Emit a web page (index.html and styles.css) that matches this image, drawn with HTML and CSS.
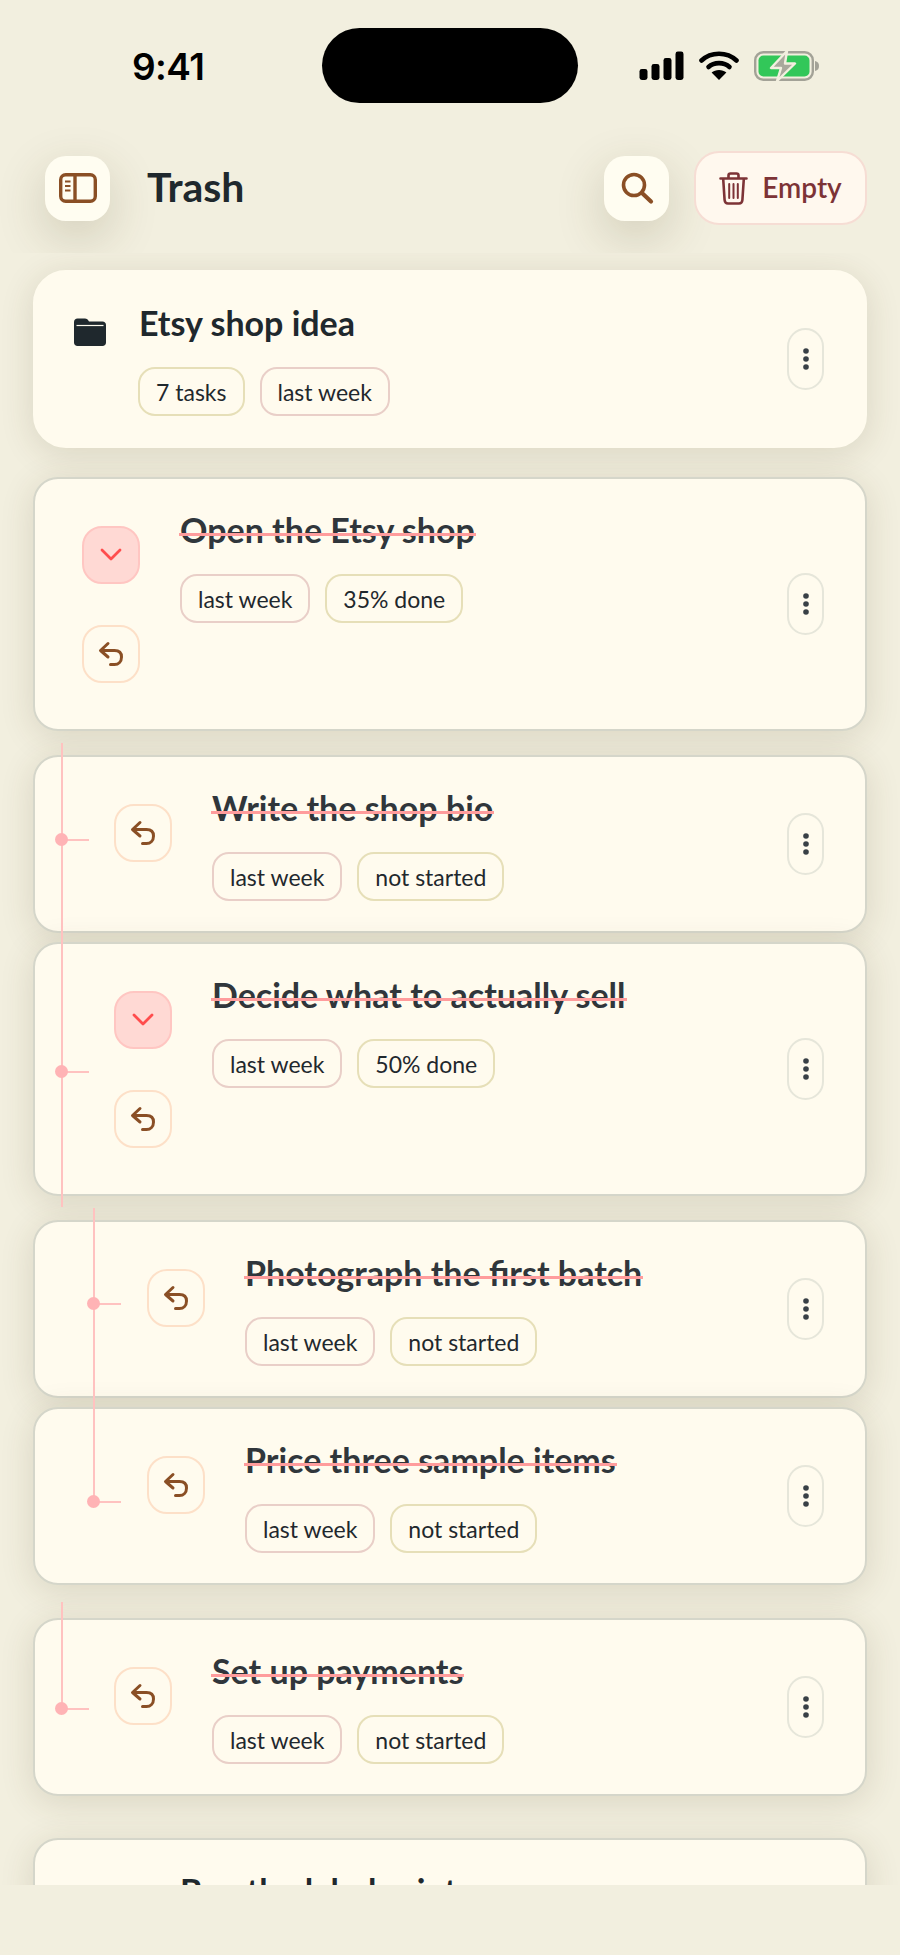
FILE: index.html
```html
<!DOCTYPE html>
<html lang="en">
<head>
    <meta charset="UTF-8">
    <meta name="viewport" content="width=device-width, initial-scale=1.0">
    <title>Trash</title>
    <link rel="stylesheet" href="styles.css">
</head>
<body>
    <svg class="sprites" width="0" height="0">
        <symbol id="undo" viewBox="0 0 26 26">
            <path d="M10 2.5 L2.5 9.5 L10 16 M3 9.5 H16.5 C21 9.5 23.5 12 23.5 16 C23.5 20.5 20.5 23.5 16.5 23.5 H12.5" fill="none" stroke="currentColor" stroke-width="3" stroke-linecap="round" stroke-linejoin="round"/>
        </symbol>
        <symbol id="chevron" viewBox="0 0 22 14">
            <path d="M2 2 L11 11 L20 2" fill="none" stroke="currentColor" stroke-width="2.8" stroke-linecap="round" stroke-linejoin="round"/>
        </symbol>
        <symbol id="dots" viewBox="0 0 8 24">
            <circle cx="4" cy="4" r="2.8"/>
            <circle cx="4" cy="12" r="2.8"/>
            <circle cx="4" cy="20" r="2.8"/>
        </symbol>
    </svg>

    <div class="status-bar">
        <span class="clock">9:41</span>
        <div class="island"></div>
        <div class="status-icons">
            <svg class="signal" width="45" height="29" viewBox="0 0 45 29">
                <rect x="0.5" y="18" width="8" height="11" rx="2.4"/>
                <rect x="12.5" y="13" width="8" height="16" rx="2.4"/>
                <rect x="24.5" y="7" width="8" height="22" rx="2.4"/>
                <rect x="36.5" y="0.5" width="8" height="28.5" rx="2.4"/>
            </svg>
            <svg class="wifi" width="40" height="29" viewBox="0 0 40 29">
                <path d="M2.5 9.5 C12 0.5 28 0.5 37.5 9.5" fill="none" stroke="#000" stroke-width="4.6" stroke-linecap="round"/>
                <path d="M9.5 16 C15 10.8 25 10.8 30.5 16" fill="none" stroke="#000" stroke-width="4.6" stroke-linecap="round"/>
                <path d="M20 29 L12.6 21.6 C16.5 18.2 23.5 18.2 27.4 21.6 Z"/>
            </svg>
            <svg class="battery" width="66" height="30" viewBox="0 0 66 30">
                <rect x="1.2" y="1.2" width="57.6" height="27.6" rx="8" fill="none" stroke="#a3a297" stroke-width="2.4"/>
                <rect x="4.5" y="4.5" width="51" height="21" rx="5" fill="#32c759"/>
                <path d="M61 10 C64 10.6 65 12.5 65 15 C65 17.5 64 19.4 61 20 Z" fill="#a3a297"/>
                <path d="M33 0 L17 17 H27 L23 30 L41 12.5 H31 Z" fill="#a9a89c" stroke="#f2efdf" stroke-width="2.4" stroke-linejoin="round"/>
            </svg>
        </div>
    </div>

    <header class="top-bar">
        <button class="icon-btn">
            <svg width="38" height="30" viewBox="0 0 38 30">
                <rect x="1.7" y="1.7" width="34.6" height="26.6" rx="5" fill="none" stroke="#8a4f25" stroke-width="3.4"/>
                <path d="M16 2 V28" stroke="#8a4f25" stroke-width="3.4"/>
                <path d="M6 8.5 H11.5 M6 13 H11.5 M6 17.5 H11.5" stroke="#8a4f25" stroke-width="2.2"/>
            </svg>
        </button>
        <h1>Trash</h1>
        <button class="icon-btn search-btn">
            <svg width="34" height="34" viewBox="0 0 34 34">
                <circle cx="14" cy="14" r="10.5" fill="none" stroke="#8a4f25" stroke-width="3.6"/>
                <path d="M22 22 L31 30.5" stroke="#8a4f25" stroke-width="4.2" stroke-linecap="round"/>
            </svg>
        </button>
        <button class="empty-btn">
            <svg width="29" height="33" viewBox="0 0 29 33">
                <path d="M1.5 6.5 H27.5 M9.5 6 V3.5 C9.5 2.2 10.3 1.5 11.5 1.5 H17.5 C18.7 1.5 19.5 2.2 19.5 3.5 V6 M4.2 7 L5.6 28 C5.8 30.3 7 31.5 9 31.5 H20 C22 31.5 23.2 30.3 23.4 28 L24.8 7" fill="none" stroke="#7d3336" stroke-width="2.6" stroke-linecap="round" stroke-linejoin="round"/>
                <path d="M10.2 12 V26 M14.5 12 V26 M18.8 12 V26" stroke="#7d3336" stroke-width="2" stroke-linecap="round"/>
            </svg>
            <span class="empty-label">Empty</span>
        </button>
    </header>

    <main class="list">
        <section class="card project-card">
            <svg class="folder" width="32" height="28" viewBox="0 0 32 28">
                <path d="M3.5 0.5 H11 C12.6 0.5 13.4 1.2 14.2 2.3 L15 3.5 H28.5 C30.5 3.5 32 5 32 7 V24.5 C32 26.5 30.5 28 28.5 28 H3.5 C1.5 28 0 26.5 0 24.5 V4 C0 2 1.5 0.5 3.5 0.5 Z" fill="#1f282d"/>
                <path d="M2.5 7.5 H29.5" stroke="#fffbee" stroke-width="1.2"/>
            </svg>
            <div class="card-body">
                <h2>Etsy shop idea</h2>
                <div class="tags">
                    <span class="tag">7 tasks</span>
                    <span class="tag tag-date">last week</span>
                </div>
            </div>
            <button class="menu-btn"><svg width="8" height="24"><use href="#dots"/></svg></button>
        </section>

        <section class="card gap-big">
            <div class="actions">
                <button class="square-btn chevron-btn"><svg width="22" height="14"><use href="#chevron"/></svg></button>
                <button class="square-btn undo-btn"><svg width="26" height="26"><use href="#undo"/></svg></button>
            </div>
            <div class="card-body">
                <h2 class="done">Open the Etsy shop</h2>
                <div class="tags">
                    <span class="tag tag-date">last week</span>
                    <span class="tag">35% done</span>
                </div>
            </div>
            <button class="menu-btn"><svg width="8" height="24"><use href="#dots"/></svg></button>
        </section>

        <div class="thread-group gap-mid">
            <div class="thread thread-one">
                <i class="branch branch-bio"></i>
                <i class="branch branch-sell"></i>
            </div>
            <section class="card level-1">
                <div class="actions">
                    <button class="square-btn undo-btn"><svg width="26" height="26"><use href="#undo"/></svg></button>
                </div>
                <div class="card-body">
                    <h2 class="done">Write the shop bio</h2>
                    <div class="tags">
                        <span class="tag tag-date">last week</span>
                        <span class="tag">not started</span>
                    </div>
                </div>
                <button class="menu-btn"><svg width="8" height="24"><use href="#dots"/></svg></button>
            </section>
            <section class="card level-1 gap-tight">
                <div class="actions">
                    <button class="square-btn chevron-btn"><svg width="22" height="14"><use href="#chevron"/></svg></button>
                    <button class="square-btn undo-btn"><svg width="26" height="26"><use href="#undo"/></svg></button>
                </div>
                <div class="card-body">
                    <h2 class="done">Decide what to actually sell</h2>
                    <div class="tags">
                        <span class="tag tag-date">last week</span>
                        <span class="tag">50% done</span>
                    </div>
                </div>
                <button class="menu-btn"><svg width="8" height="24"><use href="#dots"/></svg></button>
            </section>
        </div>

        <div class="thread-group gap-mid">
            <div class="thread thread-two">
                <i class="branch branch-photo"></i>
                <i class="branch branch-price"></i>
            </div>
            <section class="card level-2">
                <div class="actions">
                    <button class="square-btn undo-btn"><svg width="26" height="26"><use href="#undo"/></svg></button>
                </div>
                <div class="card-body">
                    <h2 class="done">Photograph the first batch</h2>
                    <div class="tags">
                        <span class="tag tag-date">last week</span>
                        <span class="tag">not started</span>
                    </div>
                </div>
                <button class="menu-btn"><svg width="8" height="24"><use href="#dots"/></svg></button>
            </section>
            <section class="card level-2 gap-tight">
                <div class="actions">
                    <button class="square-btn undo-btn"><svg width="26" height="26"><use href="#undo"/></svg></button>
                </div>
                <div class="card-body">
                    <h2 class="done">Price three sample items</h2>
                    <div class="tags">
                        <span class="tag tag-date">last week</span>
                        <span class="tag">not started</span>
                    </div>
                </div>
                <button class="menu-btn"><svg width="8" height="24"><use href="#dots"/></svg></button>
            </section>
        </div>

        <div class="thread-group gap-large">
            <div class="thread thread-three">
                <i class="branch branch-pay"></i>
            </div>
            <section class="card level-1">
                <div class="actions">
                    <button class="square-btn undo-btn"><svg width="26" height="26"><use href="#undo"/></svg></button>
                </div>
                <div class="card-body">
                    <h2 class="done">Set up payments</h2>
                    <div class="tags">
                        <span class="tag tag-date">last week</span>
                        <span class="tag">not started</span>
                    </div>
                </div>
                <button class="menu-btn"><svg width="8" height="24"><use href="#dots"/></svg></button>
            </section>
        </div>

        <section class="card gap-last">
            <div class="actions">
                <button class="square-btn undo-btn"><svg width="26" height="26"><use href="#undo"/></svg></button>
            </div>
            <div class="card-body">
                <h2>Buy the label printer</h2>
            </div>
        </section>
    </main>
</body>
</html>
```

FILE: styles.css
```css
* {
    box-sizing: border-box;
}
body {
    margin: 0;
    height: 1955px;
    overflow: hidden;
    background: #f2efdf;
    font-family: 'Lato', sans-serif;
    color: #1f282d;
}
button {
    font-family: inherit;
    padding: 0;
    cursor: pointer;
}
.sprites {
    position: absolute;
}

/* status bar */
.status-bar {
    height: 127px;
    display: flex;
    align-items: flex-start;
    padding-top: 28px;
}
.clock {
    width: 322px;
    padding: 18px 0 0 132px;
    font-family: 'Inter', sans-serif;
    font-size: 37px;
    line-height: 42px;
    font-weight: 600;
    letter-spacing: -0.6px;
    color: #000;
}
.island {
    width: 256px;
    height: 75px;
    border-radius: 38px;
    background: #000;
}
.status-icons {
    display: flex;
    align-items: flex-start;
    padding: 23px 0 0 61px;
}
.wifi {
    margin-left: 15px;
}
.battery {
    margin-left: 15px;
}

/* top bar */
.top-bar {
    height: 126px;
    display: flex;
    align-items: center;
    padding: 0 33px 4px 45px;
    overflow: hidden;
}
.top-bar h1 {
    flex: 1;
    margin: 0 0 2px 37px;
    font-size: 41px;
    font-weight: 700;
    line-height: 48px;
}
.icon-btn {
    width: 65px;
    height: 65px;
    border: none;
    border-radius: 21px;
    background: #fffdf1;
    display: flex;
    align-items: center;
    justify-content: center;
    box-shadow: 0 16px 50px rgba(70, 60, 20, 0.2);
}
.empty-btn {
    width: 173px;
    height: 74px;
    margin-left: 25px;
    border: 2px solid #f6ddd4;
    border-radius: 25px;
    background: #fff8ee;
    color: #7d3336;
    font-size: 28px;
    font-weight: 600;
    display: flex;
    align-items: center;
    justify-content: center;
    gap: 14px;
}
.empty-label {
    margin-bottom: 3px;
}

/* list */
.list {
    height: 1632px;
    padding: 17px 33px 0;
    overflow: hidden;
}
.card {
    position: relative;
    display: flex;
    align-items: flex-start;
    min-height: 178px;
    padding-left: 47px;
    background: #fffbee;
    border: 2px solid #d5d6ca;
    border-radius: 25px;
    box-shadow: 0 6px 34px rgba(70, 60, 20, 0.14);
}
.project-card {
    border-color: #fffbee;
    border-radius: 33px;
    padding-left: 39px;
}
.gap-big {
    margin-top: 29px;
}
.gap-mid {
    margin-top: 24px;
}
.gap-large {
    margin-top: 33px;
}
.gap-tight {
    margin-top: 9px;
}
.gap-last {
    margin-top: 42px;
}
.level-1 {
    padding-left: 79px;
}
.level-2 {
    padding-left: 112px;
}
.folder {
    margin-top: 46px;
    flex: none;
}
.project-card .card-body {
    margin-left: 33px;
    padding-top: 31px;
}
.project-card .tags {
    margin-left: -1px;
}
.actions {
    flex: none;
    width: 58px;
    padding: 47px 0 46px;
    display: flex;
    flex-direction: column;
    gap: 41px;
}
.card-body {
    flex: 1;
    margin-left: 40px;
    padding-top: 31px;
}
.card-body h2 {
    margin: 0;
    font-size: 34px;
    line-height: 40px;
    font-weight: 700;
}
.done {
    color: #30363b;
    width: fit-content;
    position: relative;
}
.done::after {
    content: "";
    position: absolute;
    left: -1px;
    right: -1px;
    top: 23px;
    height: 3px;
    background: #ff9c9c;
}
.tags {
    display: flex;
    gap: 15px;
    margin-top: 24px;
}
.tag {
    height: 49px;
    padding: 0 16px;
    display: flex;
    align-items: center;
    border: 2px solid #e6dfb8;
    border-radius: 17px;
    font-size: 23px;
}
.tag-date {
    border-color: #e9cfc8;
}
.square-btn {
    width: 58px;
    height: 58px;
    border-radius: 20px;
    display: flex;
    align-items: center;
    justify-content: center;
    background: #fffbee;
}
.chevron-btn {
    border: 2px solid #ffc6c2;
    background: #ffd9d4;
    color: #ff4d4d;
}
.undo-btn {
    border: 2px solid #fde0c8;
    color: #8a4f25;
}
.menu-btn {
    position: absolute;
    right: 41px;
    top: 50%;
    width: 37px;
    height: 62px;
    margin-top: -31px;
    border: 2px solid #e6e6da;
    border-radius: 19px;
    background: #fffbee;
    fill: #394046;
    display: flex;
    align-items: center;
    justify-content: center;
}

/* threads between parent and child tasks */
.thread-group {
    position: relative;
}
.thread {
    position: absolute;
    z-index: 2;
    width: 2px;
    background: #ffc2c0;
}
.thread-one {
    left: 28px;
    top: -12px;
    height: 464px;
}
.thread-two {
    left: 60px;
    top: -12px;
    height: 295px;
}
.thread-three {
    left: 28px;
    top: -16px;
    height: 107px;
}
.branch {
    position: absolute;
    left: 1px;
    width: 27px;
    height: 2px;
    background: #ffc2c0;
}
.branch::before {
    content: "";
    position: absolute;
    left: -7px;
    top: -6px;
    width: 13px;
    height: 13px;
    border-radius: 50%;
    background: #ffb3b5;
}
.branch-bio {
    top: 96px;
}
.branch-sell {
    top: 328px;
}
.branch-photo {
    top: 95px;
}
.branch-price {
    top: 293px;
}
.branch-pay {
    top: 106px;
}
```
